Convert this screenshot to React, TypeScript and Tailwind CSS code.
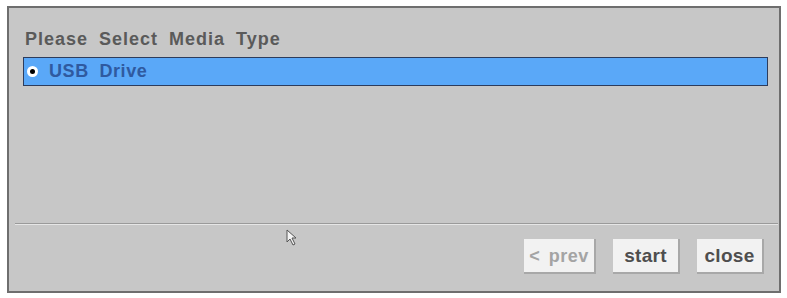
export default function App() {
  return (
    <div className="w-[787px] h-[298px] bg-white pt-[6px] pl-[7px] font-['Liberation_Sans',Arial,sans-serif]">
      <div className="relative w-[774px] h-[287px] bg-[#c7c7c7] border-2 border-[#6e6e6e] flex flex-col">
        <div className="px-[14px] pt-[20px]">
          <div className="text-[18px] font-bold text-[#5a5a5a] leading-[22px] tracking-[1px] [word-spacing:5px] pl-[2px]">
            Please Select Media Type
          </div>
          <div className="mt-[7px] h-[29px] w-[745px] bg-[#5aa8f8] border border-[#2d3c5c] flex items-center pl-[3px]">
            <span className="w-[11px] h-[11px] rounded-full bg-white flex items-center justify-center">
              <span className="w-[5px] h-[5px] rounded-full bg-black" />
            </span>
            <span className="ml-[11px] text-[18px] font-bold text-[#2f5aa0] tracking-[0.6px] [word-spacing:5px]">
              USB Drive
            </span>
          </div>
        </div>
        <div className="mt-auto">
          <div className="ml-[6px] mr-[1px] border-t border-[#9a9a9a] border-b border-b-[#e6e6e6]" />
          <div className="flex justify-end gap-[17px] pr-[15px] pt-[14px] pb-[17px]">
            <button className="w-[72px] h-[35px] bg-[#f2f2f2] border-r-2 border-b-2 border-[#a8a8a8] text-[18px] font-bold text-[#a4a4a4] tracking-[0.5px] [word-spacing:3px] leading-none">
              &lt; prev
            </button>
            <button className="w-[67px] h-[35px] bg-[#f2f2f2] border-r-2 border-b-2 border-[#a8a8a8] text-[19px] font-bold text-[#4e4e4e] tracking-[0.3px] leading-none">
              start
            </button>
            <button className="w-[67px] h-[35px] bg-[#f2f2f2] border-r-2 border-b-2 border-[#a8a8a8] text-[19px] font-bold text-[#4e4e4e] tracking-[0.3px] leading-none">
              close
            </button>
          </div>
        </div>
        <svg className="absolute left-[277px] top-[221px]" width="14" height="18" viewBox="0 0 14 18">
          <path d="M1 1 L1 13 L4 10 L7 16 L9 15 L6 9 L10 9 Z" fill="#f4f4f4" stroke="#555" strokeWidth="1" strokeLinejoin="round" />
        </svg>
      </div>
    </div>
  );
}
